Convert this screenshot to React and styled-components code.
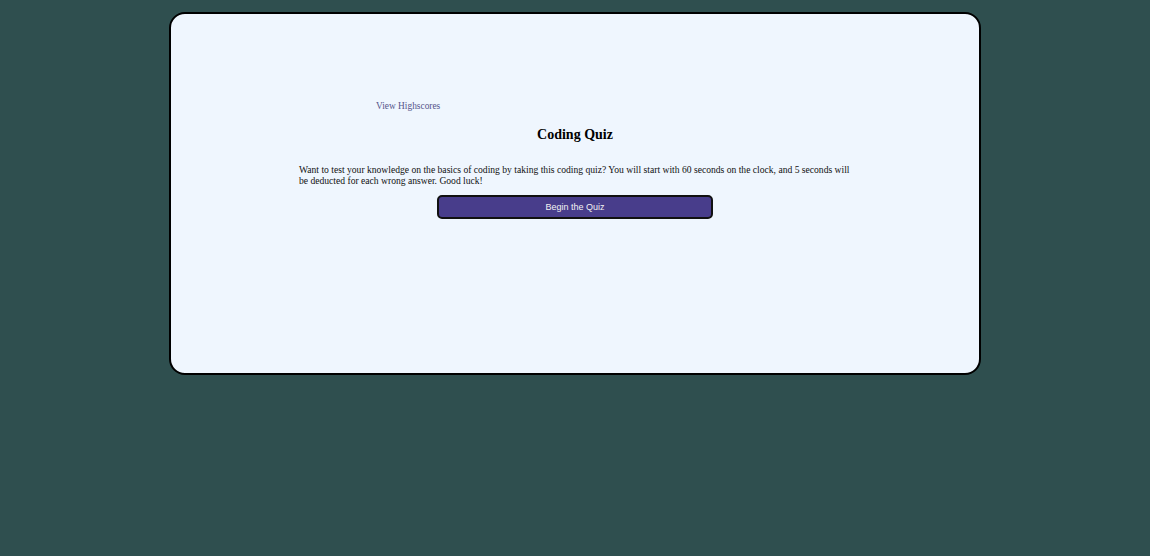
import React from 'react'
import styled, { createGlobalStyle } from 'styled-components'

const GlobalStyle = createGlobalStyle`
  html, body {
    margin: 0;
    padding: 0;
    background-color: #2F4F4F;
    font-family: "Liberation Serif", "Times New Roman", serif;
  }
  body {
    min-height: 556px;
  }
`

const Page = styled.div`
  padding-top: 12px;
  display: flex;
  justify-content: center;
`
const Card = styled.main`
  box-sizing: border-box;
  width: 812px;
  height: 363px;
  background-color: #EFF6FE;
  border: 2px solid #000;
  border-radius: 16px;
  padding-top: 81px;
  display: flex;
  flex-direction: column;
  align-items: center;
`
const Nav = styled.nav`
  align-self: stretch;
  padding-left: 205px;
`
const NavLink = styled.a`
  font-size: 9.4px;
  color: #55558a;
  text-decoration: none;
  cursor: pointer;
`
const Title = styled.h1`
  font-size: 14px;
  font-weight: bold;
  color: #000;
  margin: 14px 0 0;
`
const Intro = styled.p`
  width: 552px;
  font-size: 9.6px;
  line-height: 11px;
  color: #111;
  margin: 21px 0 0;
`
const StartButton = styled.button`
  box-sizing: border-box;
  width: 276px;
  height: 24px;
  margin-top: 9px;
  background-color: #483D8B;
  color: #f2f2f2;
  border: 2px solid #111;
  border-radius: 5px;
  font-family: "Liberation Sans", Arial, sans-serif;
  font-size: 9px;
  cursor: pointer;
`

const App = () => {
  return (
    <>
      <GlobalStyle />
      <Page>
        <Card>
          <Nav>
            <NavLink>View Highscores</NavLink>
          </Nav>
          <Title>Coding Quiz</Title>
          <Intro>
            Want to test your knowledge on the basics of coding by taking this coding quiz? You will start with 60 seconds on the clock, and 5 seconds will be deducted for each wrong answer. Good luck!
          </Intro>
          <StartButton>Begin the Quiz</StartButton>
        </Card>
      </Page>
    </>
  )
}

export default App
